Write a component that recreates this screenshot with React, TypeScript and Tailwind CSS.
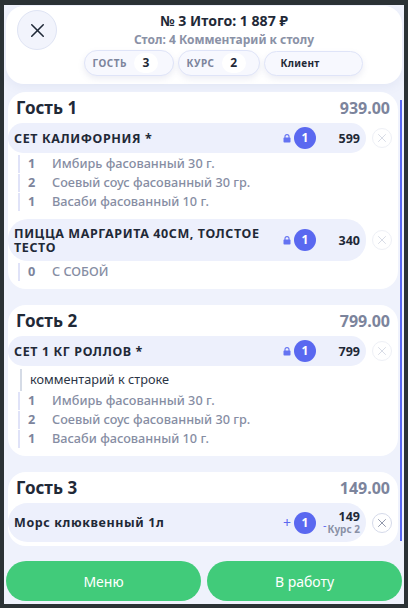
import React from 'react';
import { X } from 'lucide-react';

interface Mod {
  qty: number;
  name: string;
}

interface Line {
  name: string;
  price: string;
  course?: string;
  comment?: string;
  mods?: Mod[];
}

interface Guest {
  title: string;
  total: string;
  lines: Line[];
  cls: string;
}

const sauces: Mod[] = [
  { qty: 1, name: 'Имбирь фасованный 30 г.' },
  { qty: 2, name: 'Соевый соус фасованный 30 гр.' },
  { qty: 1, name: 'Васаби фасованный 10 г.' },
];

const guests: Guest[] = [
  {
    title: 'Гость 1',
    total: '939.00',
    cls: 'h-[197px]',
    lines: [
      { name: 'СЕТ КАЛИФОРНИЯ *', price: '599', mods: sauces },
      { name: 'ПИЦЦА МАРГАРИТА 40СМ, ТОЛСТОЕ ТЕСТО', price: '340', mods: [{ qty: 0, name: 'С СОБОЙ' }] },
    ],
  },
  {
    title: 'Гость 2',
    total: '799.00',
    cls: 'h-[151px]',
    lines: [{ name: 'СЕТ 1 КГ РОЛЛОВ *', price: '799', comment: 'комментарий к строке', mods: sauces }],
  },
  {
    title: 'Гость 3',
    total: '149.00',
    cls: 'h-[74px]',
    lines: [{ name: 'Морс клюквенный 1л', price: '149', course: 'Курс 2' }],
  },
];

function LockIcon() {
  return (
    <svg width="8" height="9" viewBox="0 0 8 9" className="text-[#6473f2]">
      <path d="M2 4V2.6a2 2 0 0 1 4 0V4" fill="none" stroke="currentColor" strokeWidth="1.1" />
      <rect x="0.5" y="3.6" width="7" height="5" rx="0.8" fill="currentColor" />
    </svg>
  );
}

function Pill({ label, value, className }: { label: string; value: string; className: string }) {
  return (
    <div className={`flex items-center h-[26px] rounded-full border border-[#dfe4f8] bg-[#f7f8fe] shadow-[0_3px_6px_rgba(120,130,180,0.14)] pl-[8px] ${className}`}>
      <span className="text-[10px] font-bold tracking-[0.5px] text-[#7c849c]">{label}</span>
      <span className="ml-[7px] w-[24px] h-[20px] rounded-full bg-white flex items-center justify-center text-[12px] font-bold text-[#1f2937]">{value}</span>
    </div>
  );
}

function OrderLine({ line }: { line: Line }) {
  const active = !!line.course;
  return (
    <div>
      <div className="flex items-center">
        <div className={`w-[358px] rounded-[20px] bg-[#edf0fc] flex items-center pl-[6px] pr-[6px] ${line.course ? 'h-[39px]' : line.name.length > 20 ? 'h-[42px]' : 'h-[30px]'}`}>
          <div className={`w-[266px] text-[12.5px] leading-[14px] font-bold tracking-[0.6px] text-[#1f2937] ${active ? '' : 'pt-[2px]'}`}>{line.name}</div>
          <div className="w-[12px] flex justify-center shrink-0 ml-[1px]">
            {active ? <span className="text-[14px] leading-[14px] text-[#5a68f0]">+</span> : <LockIcon />}
          </div>
          <div className="w-[22px] h-[22px] ml-[1px] rounded-full bg-[#5a68f0] text-white flex items-center justify-center text-[12px] font-bold shrink-0">1</div>
          <div className={`relative flex-1 text-right ${active ? '' : 'pt-[2px]'}`}>
            {active && <span className="absolute left-[7px] top-[9px] text-[11px] leading-[12px] text-[#5a68f0]">-</span>}
            <div className="text-[12.5px] leading-[14px] font-bold text-[#1f2937]">{line.price}</div>
            {line.course && <div className="text-[10px] leading-[11px] font-bold text-[#8a91a6]">{line.course}</div>}
          </div>
        </div>
        <div className={`ml-[6px] w-[20px] h-[20px] rounded-full border bg-white flex items-center justify-center ${active ? 'border-[#d5daea] text-[#8a91a6]' : 'border-[#eef0f6] text-[#d5d9e4]'}`}>
          <X size={14} strokeWidth={1.6} />
        </div>
      </div>
      {(line.comment || line.mods) && (
        <div className="pt-[2px] pl-[10px]">
          {line.comment && (
            <div className="ml-[2px] h-[22px] mt-[1px] mb-[1px] border-l-[2px] border-[#d5dbe6] pl-[8px] flex items-center text-[12.7px] text-[#2b3445]">
              {line.comment}
            </div>
          )}
          {line.mods?.map((m, i) => (
            <div key={i} className="h-[18px] mb-[1px] border-l-[2px] border-[#e0e3f8] flex items-center text-[12.7px] font-medium text-[#868da3]">
              <span className="w-[24px] pl-[8px] font-bold text-[#7c849c]">{m.qty}</span>
              <span className="ml-[8px]">{m.name}</span>
            </div>
          ))}
        </div>
      )}
    </div>
  );
}

export default function App() {
  return (
    <div className="w-[408px] h-[608px] bg-[#2b3235] pt-[5px] pb-[4px] px-[4px] font-['Noto_Sans','Open_Sans',sans-serif] overflow-hidden">
      <div className="h-[599px] bg-[#eff2fc] flex flex-col">
        {/* Header */}
        <div className="mt-[1px] mx-[2px] h-[78px] rounded-[18px] bg-white flex shrink-0 relative shadow-[0_4px_10px_rgba(120,130,180,0.08)]">
          <div className="absolute left-[11px] top-[4px] w-[40px] h-[40px] rounded-full border border-[#dfe4f4] bg-[#f2f4fc] flex items-center justify-center text-[#1f2937]">
            <X size={23} strokeWidth={1.6} />
          </div>
          <div className="flex-1 flex flex-col items-center">
            <div className="mt-[5px] ml-[40px] h-[20px] leading-[20px] text-[14.1px] font-bold text-[#1f2937]">№ 3 Итого: 1 887 ₽</div>
            <div className="ml-[40px] h-[18px] leading-[18px] text-[12px] font-bold text-[#8a91a6]">Стол: 4 Комментарий к столу</div>
            <div className="mt-[1px] ml-[38px] flex items-center gap-[4px]">
              <Pill label="ГОСТЬ" value="3" className="w-[90px]" />
              <Pill label="КУРС" value="2" className="w-[82px]" />
              <div className="flex items-center h-[25px] w-[99px] rounded-full border border-[#dfe4f8] bg-[#f7f8fe] shadow-[0_3px_6px_rgba(120,130,180,0.14)] pl-[16px] text-[10px] font-bold tracking-[0.3px] text-[#1f2937]">Клиент</div>
            </div>
          </div>
        </div>

        {/* Guests */}
        <div className="relative flex-1 min-h-0 mt-[8px] ml-[4px] h-[454px] overflow-hidden">
          <div className="flex flex-col gap-[16px]">
            {guests.map((g) => (
              <div key={g.title} className={`w-[390px] rounded-[18px] bg-white shrink-0 ${g.cls}`}>
                <div className="h-[31px] flex items-center justify-between pl-[8px] pr-[8px]">
                  <span className="text-[17px] font-bold text-[#1f2937]">{g.title}</span>
                  <span className="text-[16px] font-bold text-[#7c849c]">{g.total}</span>
                </div>
                <div className="flex flex-col gap-[7px]">
                  {g.lines.map((l) => (
                    <OrderLine key={l.name} line={l} />
                  ))}
                </div>
              </div>
            ))}
          </div>
          <div className="absolute left-[392px] top-[8px] bottom-[6px] w-[2px] bg-[#5a68f0]" />
        </div>

        {/* Actions */}
        <div className="mx-[2px] mt-[14px] mb-[3px] flex gap-[6px] shrink-0">
          <button className="flex-1 h-[40px] rounded-[20px] bg-[#41cb7a] text-white text-[14px]">Меню</button>
          <button className="flex-1 h-[40px] rounded-[20px] bg-[#41cb7a] text-white text-[14px]">В работу</button>
        </div>
      </div>
    </div>
  );
}
